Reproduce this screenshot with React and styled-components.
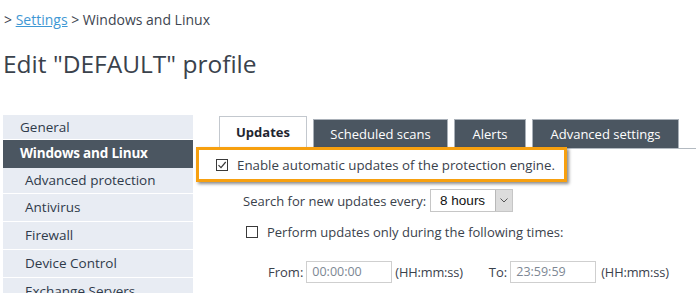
import React from 'react';
import styled, { createGlobalStyle } from 'styled-components';

const GlobalStyle = createGlobalStyle`
  body {
    margin: 0;
    background: #ffffff;
    font-family: 'Open Sans', 'Lato', sans-serif;
    color: #3d4550;
  }
`;

const Page = styled.div`
  width: 696px;
  height: 293px;
  overflow: hidden;
  padding: 0 0 0 3px;
  box-sizing: border-box;
`;

const Breadcrumb = styled.div`
  font-size: 14px;
  padding: 10px 0 0 1px;
  height: 20px;
  a {
    color: #3f98d4;
    text-decoration: underline;
  }
`;

const Title = styled.h1`
  margin: 0;
  padding: 19px 0 0 0;
  font-size: 24.5px;
  font-weight: 400;
  line-height: 30px;
  color: #3a424c;
`;

const Body = styled.div`
  display: flex;
  margin-top: 36px;
`;

const Sidebar = styled.ul`
  list-style: none;
  margin: 0;
  padding: 0;
  width: 190px;
  flex-shrink: 0;
`;

const NavItem = styled.li`
  background: ${(p) => (p.$active ? '#4b5661' : '#e8ecf3')};
  color: ${(p) => (p.$active ? '#ffffff' : '#2f3a4a')};
  font-weight: ${(p) => (p.$active ? 700 : 400)};
  font-size: 13.5px;
  height: ${(p) => p.$h || 27}px;
  line-height: ${(p) => p.$h || 27}px;
  padding-left: ${(p) => (p.$sub ? 22 : 17)}px;
  border-bottom: 1px solid ${(p) => (p.$active ? '#4b5661' : '#ffffff')};
  letter-spacing: ${(p) => (p.$active ? '-0.2px' : '0')};
`;

const Main = styled.div`
  flex: 1;
  display: flex;
  flex-direction: column;
  padding-left: 26px;
`;

const TabBar = styled.div`
  display: flex;
  align-items: flex-end;
  gap: 6px;
  border-bottom: 1px solid #b3bac1;
  height: 33px;
  margin-right: -3px;
`;

const Tab = styled.div`
  height: ${(p) => (p.$active ? 33 : 29)}px;
  line-height: ${(p) => (p.$active ? 31 : 28)}px;
  box-sizing: border-box;
  font-size: 13px;
  font-weight: ${(p) => (p.$active ? 700 : 400)};
  color: ${(p) => (p.$active ? '#1f2630' : '#ffffff')};
  background: ${(p) => (p.$active ? '#ffffff' : '#4b5661')};
  border: 1px solid ${(p) => (p.$active ? '#c3c8ce' : '#a9b0b8')};
  border-bottom: none;
  margin-bottom: ${(p) => (p.$active ? -1 : 0)}px;
  width: ${(p) => p.$w}px;
  text-align: center;
  white-space: nowrap;
`;

const Highlight = styled.div`
  display: flex;
  align-items: center;
  gap: 9px;
  margin: -2px 0 0 -23px;
  width: 371px;
  height: 35px;
  box-sizing: border-box;
  padding-left: 17px;
  border: 3px solid #f7a00f;
  box-shadow: 2px 2px 3px rgba(0, 0, 0, 0.45);
  font-size: 13.3px;
  color: #3a424c;
  white-space: nowrap;
  background: #fff;
  position: relative;
`;

const Check = styled.span`
  width: 12px;
  height: 12px;
  border: 1px solid #3a3a3a;
  box-sizing: border-box;
  display: inline-flex;
  align-items: center;
  justify-content: center;
  background: #fff;
  flex-shrink: 0;
`;

const Row = styled.div`
  display: flex;
  align-items: center;
  gap: ${(p) => p.$gap || 4}px;
  padding-left: ${(p) => p.$indent}px;
  margin-top: ${(p) => p.$top}px;
  font-size: 13px;
  color: #3a424c;
  white-space: nowrap;
`;

const Select = styled.div`
  display: flex;
  width: 83px;
  height: 23px;
  box-sizing: border-box;
  border: 1px solid #c6c6c6;
  font-family: 'Liberation Sans', Arial, sans-serif;
  font-size: 13.5px;
  color: #111;
  span {
    flex: 1;
    padding-left: 9px;
    line-height: 21px;
  }
`;

const Arrow = styled.div`
  width: 16px;
  background: #dcdcdc;
  border-left: 1px solid #b8b8b8;
  display: flex;
  align-items: center;
  justify-content: center;
`;

const TimeInput = styled.div`
  width: 86px;
  height: 22px;
  box-sizing: border-box;
  border: 1px solid #cfcfcf;
  padding-left: 5px;
  line-height: 20px;
  font-size: 12.5px;
  color: #7d8793;
`;

const Hint = styled.span`
  margin-left: ${(p) => p.$ml || 0}px;
  font-size: ${(p) => (p.$small ? '12.8px' : 'inherit')};
  letter-spacing: ${(p) => (p.$small ? '-0.15px' : '0')};
`;

const Tick = () => (
  <svg width="10" height="10" viewBox="0 0 10 10">
    <path d="M1.5 5.2 L4 7.7 L8.7 2" fill="none" stroke="#3a3a3a" strokeWidth="1.2" />
  </svg>
);

export default function App() {
  return (
    <Page>
      <GlobalStyle />
      <Breadcrumb>
        &gt; <a href="#">Settings</a> &gt; Windows and Linux
      </Breadcrumb>
      <Title>Edit "DEFAULT" profile</Title>
      <Body>
        <Sidebar>
          <NavItem $h={24}>General</NavItem>
          <NavItem $active>Windows and Linux</NavItem>
          <NavItem $sub $h={25}>Advanced protection</NavItem>
          <NavItem $sub>Antivirus</NavItem>
          <NavItem $sub>Firewall</NavItem>
          <NavItem $sub>Device Control</NavItem>
          <NavItem $sub>Exchange Servers</NavItem>
        </Sidebar>
        <Main>
          <TabBar>
            <Tab $active $w={88}>Updates</Tab>
            <Tab $w={135}>Scheduled scans</Tab>
            <Tab $w={72}>Alerts</Tab>
            <Tab $w={147}>Advanced settings</Tab>
          </TabBar>
          <Highlight>
            <Check><Tick /></Check>
            Enable automatic updates of the protection engine.
          </Highlight>
          <Row $indent={24} $top={7}>
            Search for new updates every:
            <Select>
              <span>8 hours</span>
              <Arrow>
                <svg width="8" height="5" viewBox="0 0 8 5">
                  <path d="M0.5 0.5 L4 4 L7.5 0.5" fill="none" stroke="#555" strokeWidth="1" />
                </svg>
              </Arrow>
            </Select>
          </Row>
          <Row $indent={27} $top={11} $gap={9}>
            <Check />
            Perform updates only during the following times:
          </Row>
          <Row $indent={49} $top={20} $gap={3}>
            From:
            <TimeInput>00:00:00</TimeInput>
            <Hint $small>(HH:mm:ss)</Hint>
            <Hint $ml={23}>To:</Hint>
            <TimeInput>23:59:59</TimeInput>
            <Hint $small $ml={2}>(HH:mm:ss)</Hint>
          </Row>
        </Main>
      </Body>
    </Page>
  );
}
